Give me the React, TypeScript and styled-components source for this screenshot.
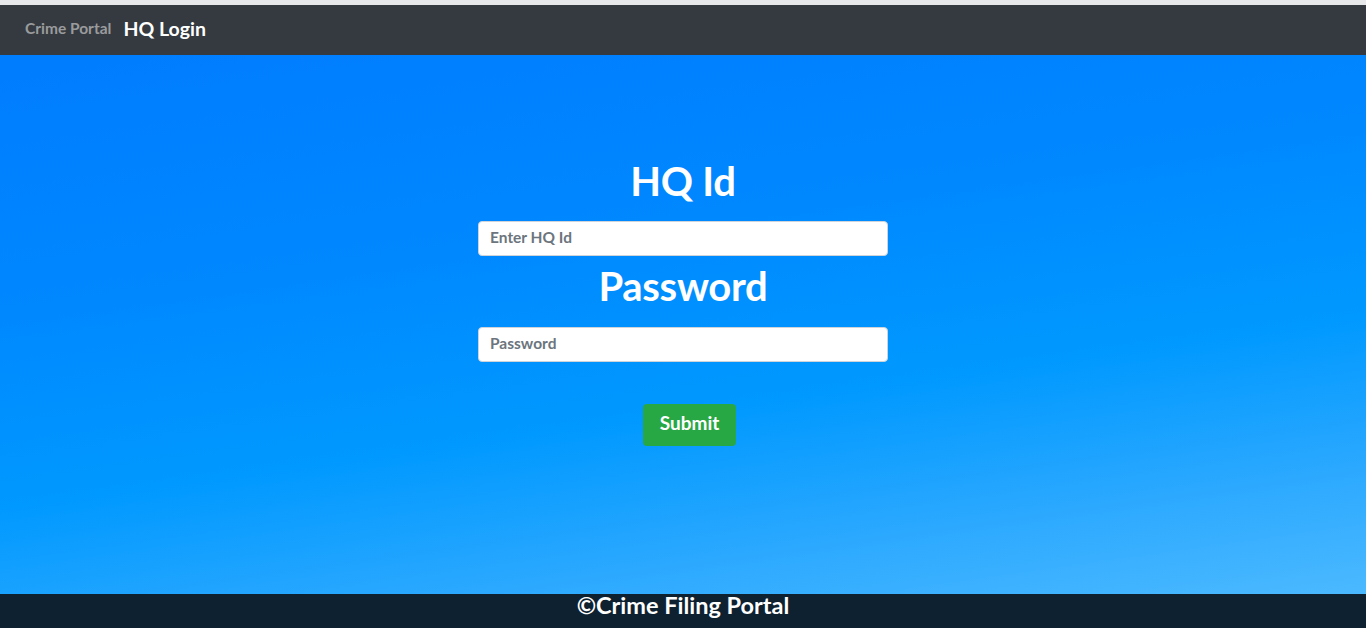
import React from "react";
import styled, { createGlobalStyle } from "styled-components";

const GlobalStyle = createGlobalStyle`
  html, body { margin: 0; padding: 0; }
  body {
    font-family: Lato, "Open Sans", sans-serif;
    background: #e6e8ea;
  }
  * { box-sizing: border-box; }
`;

const Page = styled.div`
  display: flex;
  flex-direction: column;
  height: 628px;
  padding-top: 5px;
`;

const NavBar = styled.nav`
  height: 50px;
  background: #353a41;
  display: flex;
  align-items: center;
  padding: 0 25px 4px;
  gap: 12px;
  flex-shrink: 0;
`;

const Brand = styled.span`
  color: #9a9b9d;
  font-weight: 700;
  font-size: 15.5px;
`;

const NavLink = styled.span`
  color: #ffffff;
  font-weight: 700;
  font-size: 19.5px;
`;

const Main = styled.main`
  flex: 1;
  background: linear-gradient(172deg, #007cff 0%, #0088ff 35%, #0099ff 62%, #2aa8ff 82%, #4bb9ff 100%);
  display: flex;
  flex-direction: column;
  align-items: center;
  padding-top: 102px;
`;

const Form = styled.form`
  width: 410px;
  display: flex;
  flex-direction: column;
  align-items: center;
`;

const Label = styled.h1<{ $gap: number }>`
  margin: 0 0 ${(p) => p.$gap}px;
  color: #ffffff;
  font-size: 40px;
  font-weight: 700;
  line-height: 48px;
  letter-spacing: -0.3px;
`;

const Input = styled.input`
  width: 100%;
  height: 35px;
  border: 1px solid #ced4da;
  border-radius: 4px;
  padding: 0 11px 3px;
  font-family: Lato, sans-serif;
  font-weight: 700;
  font-size: 15.5px;
  color: #495057;
  background: #fff;
  &::placeholder { color: #6c757d; }
`;

const Spacer = styled.div<{ $h: number }>`
  height: ${(p) => p.$h}px;
`;

const Submit = styled.button`
  margin-top: 42px;
  margin-left: 13px;
  width: 93px;
  height: 42px;
  padding: 0 0 5px;
  background: #28a745;
  color: #fff;
  border: none;
  border-radius: 4px;
  font-family: Lato, sans-serif;
  font-weight: 700;
  font-size: 19px;
`;

const Footer = styled.footer`
  height: 34px;
  background: #0e2131;
  color: #fff;
  text-align: center;
  font-weight: 700;
  font-size: 23.5px;
  line-height: 22px;
  flex-shrink: 0;
`;

export default function App() {
  return (
    <>
      <GlobalStyle />
      <Page>
        <NavBar>
          <Brand>Crime Portal</Brand>
          <NavLink>HQ Login</NavLink>
        </NavBar>
        <Main>
          <Form onSubmit={(e) => e.preventDefault()}>
            <Label $gap={16}>HQ Id</Label>
            <Input placeholder="Enter HQ Id" />
            <Spacer $h={6} />
            <Label $gap={17}>Password</Label>
            <Input type="password" placeholder="Password" />
            <Submit type="submit">Submit</Submit>
          </Form>
        </Main>
        <Footer>©Crime Filing Portal</Footer>
      </Page>
    </>
  );
}
